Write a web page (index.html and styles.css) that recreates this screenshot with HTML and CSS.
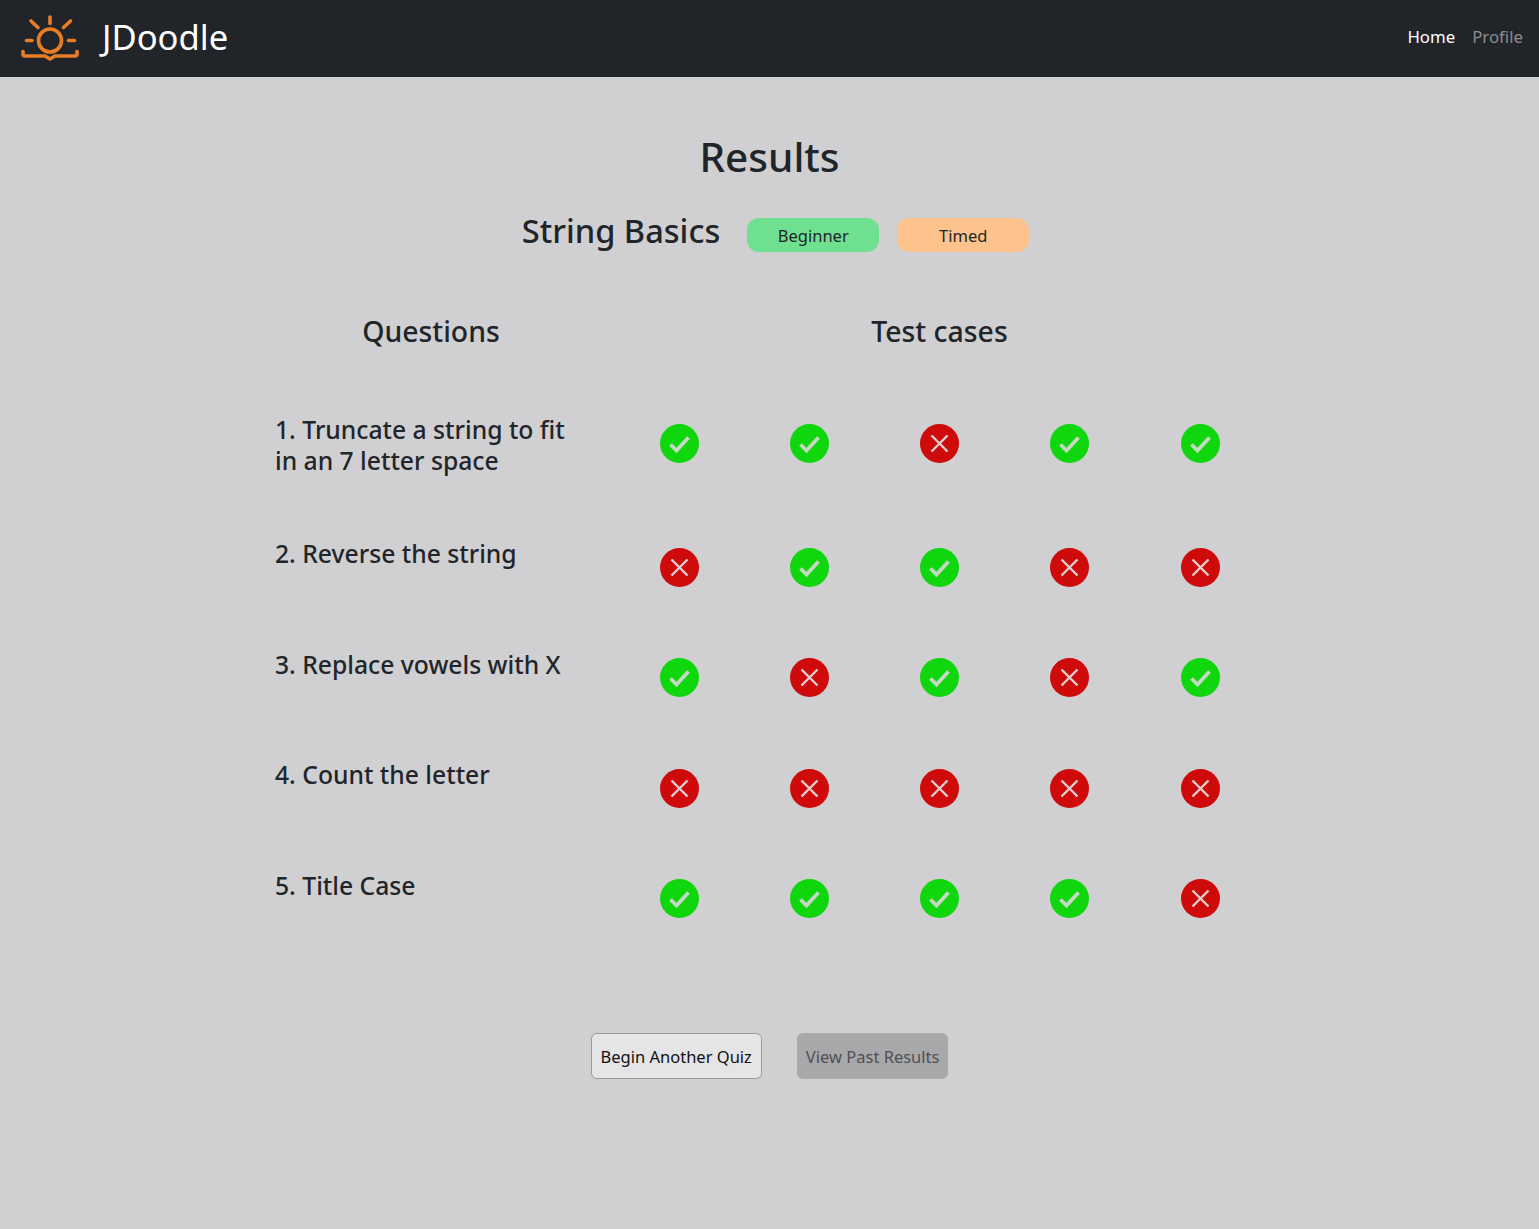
FILE: index.html
```html
<!DOCTYPE html>
<html>
<head>
  <title>JDoodle Results</title>
  <link rel="stylesheet" href="styles.css">
</head>
<body>
  <nav class="navbar">
    <a class="brand" href="#">
      <svg class="brand-logo" width="60" height="48" viewBox="0 0 60 48" fill="none" stroke="#e87d26" stroke-width="3.6" stroke-linecap="round" stroke-linejoin="round">
        <path d="M30 2v6.5"/>
        <path d="M11 6l7 6.5"/>
        <path d="M50.5 6l-7 6.5"/>
        <path d="M6.5 25.5h5.5"/>
        <path d="M48.5 25.5h6"/>
        <circle cx="30" cy="25.5" r="11.5"/>
        <path d="M3 36.5v2.5a2 2 0 0 0 2 2h20l5 3 5-3h20a2 2 0 0 0 2-2v-2.5"/>
      </svg>
      <span class="brand-name">JDoodle</span>
    </a>
    <div class="nav-links">
      <a class="nav-link active" href="#">Home</a>
      <a class="nav-link" href="#">Profile</a>
    </div>
  </nav>

  <main class="results">
    <h1>Results</h1>
    <div class="quiz-title">
      <h2>String Basics</h2>
      <span class="pill pill-level">Beginner</span>
      <span class="pill pill-type">Timed</span>
    </div>

    <div class="table-head">
      <h3 class="head-questions">Questions</h3>
      <h3 class="head-tests">Test cases</h3>
    </div>

    <div class="table-rows" id="rows"></div>

    <div class="actions">
      <button class="btn btn-light">Begin Another Quiz</button>
      <button class="btn btn-grey">View Past Results</button>
    </div>
  </main>

  <script>
    const questions = [
      ["1. Truncate a string to fit in an 7 letter space", [1, 1, 0, 1, 1]],
      ["2. Reverse the string", [0, 1, 1, 0, 0]],
      ["3. Replace vowels with X", [1, 0, 1, 0, 1]],
      ["4. Count the letter", [0, 0, 0, 0, 0]],
      ["5. Title Case", [1, 1, 1, 1, 0]]
    ];

    const passIcon = '<svg class="result-icon" viewBox="0 0 39 39"><circle cx="19.5" cy="19.5" r="19.5" fill="#10d60e"/><path d="M10.5 20.5l6 6 12-13" fill="none" stroke="#c4d8c4" stroke-width="3.8"/></svg>';
    const failIcon = '<svg class="result-icon" viewBox="0 0 39 39"><circle cx="19.5" cy="19.5" r="19.5" fill="#cf0a0a"/><path d="M11.5 11.5l16 16M27.5 11.5l-16 16" fill="none" stroke="#e2d0d0" stroke-width="2.4"/></svg>';

    const rows = document.getElementById("rows");

    questions.forEach(function(q) {
      let cells = "";
      q[1].forEach(function(passed) {
        cells += '<div class="result-cell">' + (passed ? passIcon : failIcon) + '</div>';
      });
      rows.innerHTML += '<div class="row"><div class="question">' + q[0] + '</div>' + cells + '</div>';
    });
  </script>
</body>
</html>
```

FILE: styles.css
```css
* {
  box-sizing: border-box;
}

body {
  font-family: "Noto Sans", "Open Sans", Arial, sans-serif;
  margin: 0;
  background-color: #d0d0d2;
  color: #212529;
  min-height: 1229px;
}

a {
  text-decoration: none;
}

.navbar {
  height: 77px;
  background-color: #212529;
  display: flex;
  align-items: center;
  justify-content: space-between;
  padding: 0 16px 0 20px;
}

.brand {
  display: flex;
  align-items: center;
  gap: 22px;
}

.brand-name {
  color: #fff;
  font-size: 34.6px;
  line-height: 46px;
  margin-bottom: 4px;
}

.nav-links {
  display: flex;
  gap: 17px;
  margin-bottom: 4px;
}

.nav-link {
  color: #8b8d8f;
  font-size: 16.8px;
}

.nav-link.active {
  color: #fff;
}

.results {
  padding-top: 51px;
}

h1 {
  margin: 0;
  text-align: center;
  font-size: 40.5px;
  font-weight: 500;
  line-height: 57px;
}

.quiz-title {
  display: flex;
  justify-content: center;
  align-items: center;
  margin-top: 23px;
  padding-left: 12px;
}

.quiz-title h2 {
  margin: 0 27px 0 0;
  font-size: 32.6px;
  font-weight: 500;
  line-height: 46px;
}

.pill {
  width: 132px;
  height: 34px;
  border-radius: 12px;
  font-size: 16.5px;
  display: flex;
  align-items: center;
  justify-content: center;
  margin-top: 8px;
}

.pill-level {
  background-color: #6ee08f;
  margin-right: 18px;
}

.pill-type {
  background-color: #fec38d;
}

.table-head {
  display: flex;
  margin: 57px 0 0 248px;
  height: 104px;
}

.table-head h3 {
  margin: 0;
  font-size: 28.4px;
  font-weight: 500;
  line-height: 40px;
  text-align: center;
}

.head-questions {
  width: 366px;
}

.head-tests {
  width: 651px;
}

.table-rows {
  margin-left: 275px;
}

.row {
  display: flex;
}

.question {
  width: 338.9px;
  padding-right: 40px;
  padding-bottom: 63px;
  margin-top: -1px;
  font-size: 24.7px;
  font-weight: 500;
  line-height: 31px;
}

.result-cell {
  width: 130.3px;
  height: 110.6px;
  padding-top: 8.7px;
  display: flex;
  justify-content: center;
}

.result-icon {
  width: 39px;
  height: 39px;
}

.actions {
  display: flex;
  justify-content: center;
  gap: 35px;
  margin-top: 52px;
}

.btn {
  height: 46px;
  border-radius: 6px;
  font-family: inherit;
  font-size: 16.5px;
  padding: 0 9px;
}

.btn-light {
  background-color: #e5e5e7;
  border: 1px solid #9a9a9c;
  color: #111;
}

.btn-grey {
  background-color: #a8a8aa;
  border: 1px solid #a8a8aa;
  color: #505052;
  padding: 0 8px;
}
```
